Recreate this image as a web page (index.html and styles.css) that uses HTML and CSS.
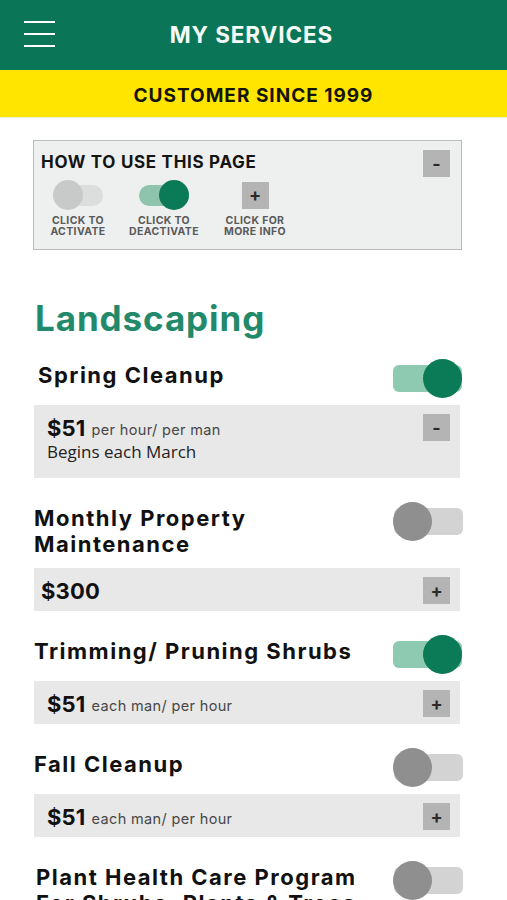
FILE: index.html
```html
<!DOCTYPE html>
<html lang="en">
<head>
<meta charset="utf-8">
<title>My Services</title>
<link rel="stylesheet" href="styles.css">
</head>
<body>
<header class="topbar">
  <button class="menu" aria-label="Menu">
    <svg width="32" height="28" viewBox="0 0 32 28"><g stroke="#ffffff" stroke-width="2"><line x1="0" y1="2" x2="31" y2="2"/><line x1="0" y1="14" x2="31" y2="14"/><line x1="0" y1="26" x2="31" y2="26"/></g></svg>
  </button>
  <div class="page-title">MY SERVICES</div>
  <div class="spacer"></div>
</header>
<div class="since">CUSTOMER SINCE 1999</div>
<main class="content">
  <section class="howto">
    <div class="howto-head">
      <div class="howto-title">HOW TO USE THIS PAGE</div>
      <span class="btn">-</span>
    </div>
    <div class="howto-items">
      <div class="howto-item w1">
        <div class="icon-slot"><span class="mini off"></span></div>
        <div class="howto-label"><div>CLICK TO</div><div>ACTIVATE</div></div>
      </div>
      <div class="howto-item w2">
        <div class="icon-slot"><span class="mini on"></span></div>
        <div class="howto-label"><div>CLICK TO</div><div>DEACTIVATE</div></div>
      </div>
      <div class="howto-item w3">
        <div class="icon-slot"><span class="btn">+</span></div>
        <div class="howto-label"><div>CLICK FOR</div><div>MORE INFO</div></div>
      </div>
    </div>
  </section>

  <h1 class="cat">Landscaping</h1>

  <div class="service">
    <div class="svc-head"><h2 class="svc-title indent">Spring Cleanup</h2><span class="toggle on"></span></div>
    <div class="svc-box">
      <div class="svc-info">
        <div class="price-line"><span class="price">$51</span> <span class="unit">per hour/ per man</span></div>
        <div class="note">Begins each March</div>
      </div>
      <span class="btn">-</span>
    </div>
  </div>

  <div class="service">
    <div class="svc-head"><h2 class="svc-title">Monthly Property<br>Maintenance</h2><span class="toggle off"></span></div>
    <div class="svc-box tight">
      <div class="svc-info">
        <div class="price-line"><span class="price">$300</span></div>
      </div>
      <span class="btn">+</span>
    </div>
  </div>

  <div class="service">
    <div class="svc-head"><h2 class="svc-title">Trimming/ Pruning Shrubs</h2><span class="toggle on"></span></div>
    <div class="svc-box">
      <div class="svc-info">
        <div class="price-line"><span class="price">$51</span> <span class="unit">each man/ per hour</span></div>
      </div>
      <span class="btn">+</span>
    </div>
  </div>

  <div class="service">
    <div class="svc-head"><h2 class="svc-title">Fall Cleanup</h2><span class="toggle off"></span></div>
    <div class="svc-box">
      <div class="svc-info">
        <div class="price-line"><span class="price">$51</span> <span class="unit">each man/ per hour</span></div>
      </div>
      <span class="btn">+</span>
    </div>
  </div>

  <div class="service last">
    <div class="svc-head"><h2 class="svc-title indent-s">Plant Health Care Program<br>For Shrubs, Plants &amp; Trees</h2><span class="toggle off"></span></div>
  </div>
</main>
</body>
</html>
```
FILE: styles.css
```css
* { box-sizing: border-box; }
html, body { margin: 0; padding: 0; background: #ffffff; }
body {
  font-family: "Inter", "Liberation Sans", sans-serif;
  color: #111111;
  width: 507px;
  height: 900px;
  overflow: hidden;
}

.topbar {
  height: 70px;
  background: #0b7657;
  display: grid;
  grid-template-columns: 1fr auto 1fr;
  align-items: center;
}
.menu {
  border: 0;
  background: none;
  padding: 0;
  margin: -3px 0 0 24px;
  width: 32px;
  height: 28px;
  display: block;
  justify-self: start;
}
.menu svg { display: block; }
.page-title {
  color: #f4fbf8;
  font-weight: 700;
  font-size: 22.5px;
  letter-spacing: 0.9px;
  margin: -1px 0 0 -4px;
}

.since {
  height: 48px;
  background: #ffe500;
  border-bottom: 1px solid #f1eecf;
  display: flex;
  align-items: center;
  justify-content: center;
  padding-top: 4px;
  font-weight: 700;
  font-size: 19px;
  letter-spacing: 1px;
  color: #151408;
}

.content {
  padding: 22px 45px 0 33px;
}

.howto {
  background: #eef0f0;
  border: 1px solid #b9bcbc;
  height: 110px;
  padding: 9px 11px 0 7px;
}
.howto-head {
  display: flex;
  justify-content: space-between;
  align-items: flex-start;
  height: 27px;
}
.howto-title {
  font-weight: 700;
  font-size: 17px;
  line-height: 20px;
  margin-top: 2px;
  letter-spacing: 0.7px;
  color: #141414;
}
.btn {
  width: 27px;
  height: 27px;
  background: #b4b4b4;
  color: #2a2a2a;
  display: flex;
  align-items: center;
  justify-content: center;
  font-weight: 700;
  font-size: 18px;
  line-height: 1;
  flex: none;
}
.howto-items {
  display: flex;
  gap: 17px;
  margin: 3px 0 0 7px;
}
.howto-item {
  display: flex;
  flex-direction: column;
  align-items: center;
}
.w1 { width: 60px; }
.w2 { width: 78px; }
.w3 { width: 70px; }
.icon-slot {
  height: 30px;
  display: flex;
  align-items: center;
}
.howto-label {
  margin-top: 5px;
  font-size: 10.5px;
  line-height: 11px;
  font-weight: 700;
  letter-spacing: 0.35px;
  color: #5a5a5a;
  text-align: center;
  white-space: nowrap;
}
.howto-label div { height: 11px; overflow: visible; }
.mini {
  position: relative;
  display: block;
  width: 50px;
  height: 21px;
  border-radius: 11px;
}
.mini::after {
  content: "";
  position: absolute;
  top: -5px;
  width: 30px;
  height: 30px;
  border-radius: 50%;
}
.mini.off { background: #dcdddd; }
.mini.off::after { left: 0; background: #c8c9c9; }
.mini.on { background: #8ec4ad; }
.mini.on::after { right: 0; background: #0b7a56; }

.cat {
  margin: 48px 0 21px 2px;
  font-size: 35px;
  line-height: 40px;
  font-weight: 700;
  color: #22896a;
  letter-spacing: 0.9px;
}

.service { margin-bottom: 24px; }
.svc-head {
  display: flex;
  justify-content: space-between;
  align-items: flex-start;
  min-height: 39px;
}
.svc-title {
  margin: 0;
  padding: 3px 0 4px 1px;
  font-size: 22px;
  line-height: 26px;
  font-weight: 700;
  letter-spacing: 1.5px;
  color: #111111;
}
.svc-title.indent { padding-left: 5px; }
.svc-title.indent-s { padding-left: 3px; }
.toggle {
  position: relative;
  flex: none;
  width: 69px;
  height: 27px;
  margin-top: 6px;
  border-radius: 6px;
}
.toggle::after {
  content: "";
  position: absolute;
  top: -6px;
  width: 39px;
  height: 39px;
  border-radius: 50%;
}
.toggle.on { background: #8ec9b1; margin-right: 0; }
.toggle.on::after { right: 0; background: #0b7a56; }
.toggle.off { background: #d3d3d3; margin-right: -1px; }
.toggle.off::after { left: -1px; background: #8f8f8f; }

.svc-box {
  margin-top: 7px;
  margin-left: 1px;
  width: 426px;
  background: #e8e8e8;
  display: flex;
  justify-content: space-between;
  align-items: flex-start;
  padding: 9px 10px 7px 13px;
}
.svc-box.tight { padding-left: 7px; }
.price-line {
  height: 27px;
  display: flex;
  align-items: center;
  white-space: nowrap;
}
.price {
  font-size: 22px;
  font-weight: 700;
  letter-spacing: 0.2px;
  color: #111111;
}
.unit {
  margin-left: 6px;
  font-size: 14.5px;
  letter-spacing: 0.35px;
  color: #474747;
  margin-top: 3px;
}
.note {
  font-family: "Open Sans", "Noto Sans", sans-serif;
  font-size: 17px;
  line-height: 22px;
  color: #222222;
  padding-bottom: 8px;
}
```
